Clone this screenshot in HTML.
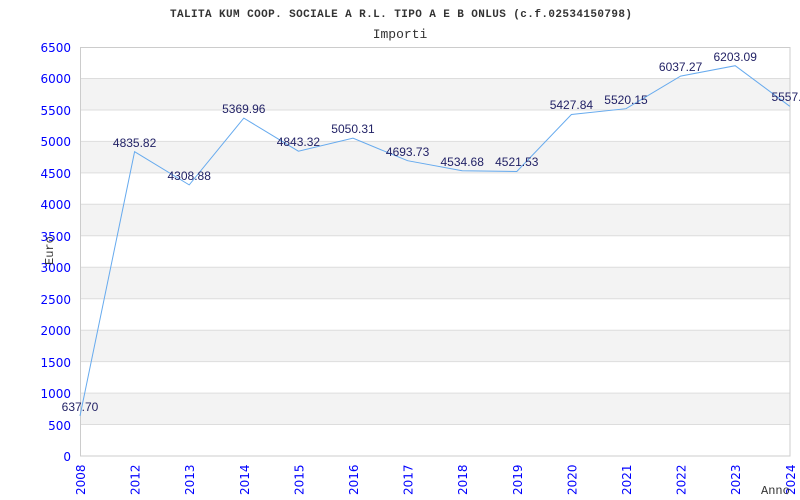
<!DOCTYPE html>
<html><head><meta charset="utf-8"><style>
html,body{margin:0;padding:0;background:#fff;}
svg{display:block;}
</style></head><body>
<svg width="800" height="500" xmlns="http://www.w3.org/2000/svg" font-family="DejaVu Sans, Liberation Sans, sans-serif">
<rect width="800" height="500" fill="#fff"/>
<text x="401" y="17" text-anchor="middle" font-family="Liberation Mono, monospace" font-size="11" font-weight="bold" fill="#333" textLength="462" lengthAdjust="spacing">TALITA KUM COOP. SOCIALE A R.L. TIPO A E B ONLUS (c.f.02534150798)</text>
<text x="400" y="38" text-anchor="middle" font-family="Liberation Mono, monospace" font-size="13" fill="#333">Importi</text>
<g fill="#f3f3f3">
<rect x="80" y="78.5" width="710" height="31.5"/>
<rect x="80" y="141.4" width="710" height="31.5"/>
<rect x="80" y="204.3" width="710" height="31.5"/>
<rect x="80" y="267.2" width="710" height="31.5"/>
<rect x="80" y="330.2" width="710" height="31.5"/>
<rect x="80" y="393.1" width="710" height="31.5"/>
</g>
<g stroke="#ddd" stroke-width="1">
<line x1="80" y1="78.5" x2="790" y2="78.5"/><line x1="80" y1="110" x2="790" y2="110"/>
<line x1="80" y1="141.4" x2="790" y2="141.4"/><line x1="80" y1="172.9" x2="790" y2="172.9"/>
<line x1="80" y1="204.3" x2="790" y2="204.3"/><line x1="80" y1="235.8" x2="790" y2="235.8"/>
<line x1="80" y1="267.2" x2="790" y2="267.2"/><line x1="80" y1="298.7" x2="790" y2="298.7"/>
<line x1="80" y1="330.2" x2="790" y2="330.2"/><line x1="80" y1="361.6" x2="790" y2="361.6"/>
<line x1="80" y1="393.1" x2="790" y2="393.1"/><line x1="80" y1="424.5" x2="790" y2="424.5"/>
</g>
<rect x="80.5" y="47.5" width="709.5" height="408.5" fill="none" stroke="#ccc"/>
<g font-size="12" fill="#0000ff" text-anchor="end">
<text x="71" y="52">6500</text><text x="71" y="83">6000</text><text x="71" y="115">5500</text>
<text x="71" y="146">5000</text><text x="71" y="178">4500</text><text x="71" y="209">4000</text>
<text x="71" y="241">3500</text><text x="71" y="272">3000</text><text x="71" y="304">2500</text>
<text x="71" y="335">2000</text><text x="71" y="367">1500</text><text x="71" y="398">1000</text>
<text x="71" y="430">500</text><text x="71" y="461">0</text>
</g>
<g font-size="12" fill="#0000ff">
<text transform="translate(85,495) rotate(-90)">2008</text>
<text transform="translate(139.6,495) rotate(-90)">2012</text>
<text transform="translate(194.2,495) rotate(-90)">2013</text>
<text transform="translate(248.8,495) rotate(-90)">2014</text>
<text transform="translate(303.4,495) rotate(-90)">2015</text>
<text transform="translate(358,495) rotate(-90)">2016</text>
<text transform="translate(412.6,495) rotate(-90)">2017</text>
<text transform="translate(467.2,495) rotate(-90)">2018</text>
<text transform="translate(521.8,495) rotate(-90)">2019</text>
<text transform="translate(576.4,495) rotate(-90)">2020</text>
<text transform="translate(631,495) rotate(-90)">2021</text>
<text transform="translate(685.6,495) rotate(-90)">2022</text>
<text transform="translate(740.2,495) rotate(-90)">2023</text>
<text transform="translate(794.8,495) rotate(-90)">2024</text>
</g>
<text transform="translate(53,265) rotate(-90)" font-family="Liberation Mono, monospace" font-size="12" fill="#333">Euro</text>
<text x="761" y="494" font-family="Liberation Mono, monospace" font-size="12" fill="#333">Anno</text>
<polyline fill="none" stroke="#66aaee" stroke-width="1" points="80,415.9 134.6,151.7 189.2,184.9 243.8,118.1 298.4,151.2 353,138.2 407.6,160.7 462.2,170.7 516.8,171.5 571.4,114.5 626,108.7 680.6,76.1 735.2,65.7 789.8,106.3"/>
<g font-family="Liberation Sans, sans-serif" font-size="12" fill="#222266" text-anchor="middle">
<text x="80" y="411">637.70</text>
<text x="134.6" y="147">4835.82</text>
<text x="189.2" y="180">4308.88</text>
<text x="243.8" y="113">5369.96</text>
<text x="298.4" y="146">4843.32</text>
<text x="353" y="133">5050.31</text>
<text x="407.6" y="156">4693.73</text>
<text x="462.2" y="166">4534.68</text>
<text x="516.8" y="166">4521.53</text>
<text x="571.4" y="109">5427.84</text>
<text x="626" y="104">5520.15</text>
<text x="680.6" y="71">6037.27</text>
<text x="735.2" y="61">6203.09</text>
<text x="789.8" y="101">5557.6</text>
</g>
</svg>
</body></html>
